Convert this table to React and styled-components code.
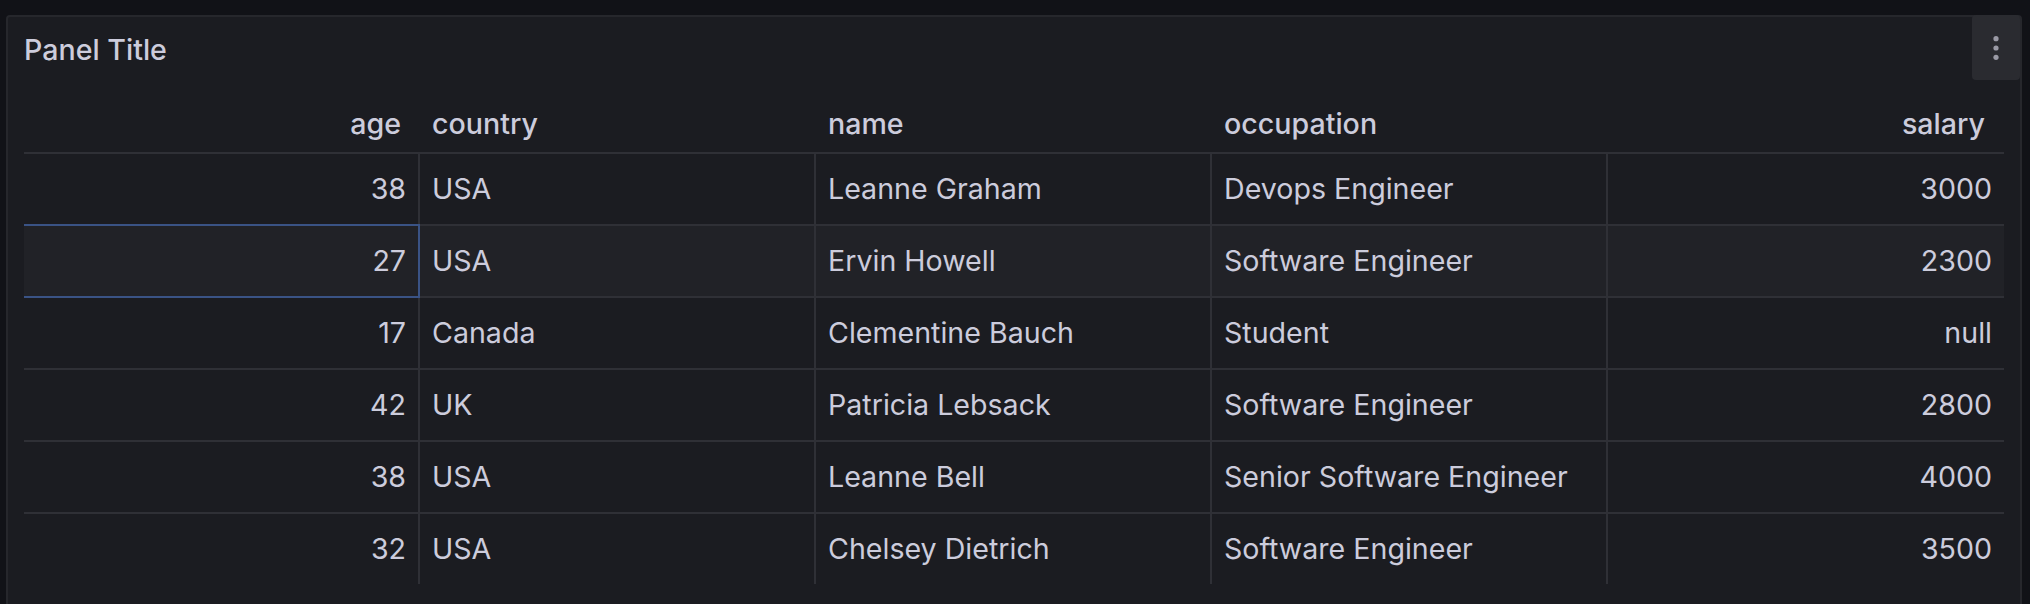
import React from "react";
import styled, { createGlobalStyle } from "styled-components";

const GlobalStyle = createGlobalStyle`
    html, body {
        margin: 0;
        padding: 0;
        background: #111217;
    }
    body {
        font-family: Inter, "Noto Sans", "Liberation Sans", sans-serif;
        color: #ccccdc;
        -webkit-font-smoothing: antialiased;
    }
`;

const Page = styled.div`
    width: 2030px;
    height: 604px;
    box-sizing: border-box;
    padding: 15px 8px 0 6px;
    overflow: hidden;
`;

const Panel = styled.div`
    box-sizing: border-box;
    height: 640px;
    background: #1b1c21;
    border: 2px solid #26272c;
    border-radius: 4px;
    padding: 0 16px;
`;

const PanelHeader = styled.div`
    height: 65px;
    display: flex;
    align-items: center;
    justify-content: space-between;
`;

const PanelTitle = styled.h2`
    margin: 0;
    font-size: 28.6px;
    font-weight: 500;
    line-height: 40px;
    color: #ccccdc;
`;

const MenuButton = styled.button`
    align-self: flex-start;
    width: 48px;
    height: 65px;
    margin: -2px -16px 0 0;
    padding: 0;
    border: none;
    border-radius: 4px;
    background: #2a2b30;
    display: flex;
    align-items: center;
    justify-content: center;
    cursor: pointer;
`;

const Table = styled.div`
    width: 100%;
`;

const HeaderRow = styled.div`
    display: grid;
    grid-template-columns: repeat(5, 1fr);
    border-bottom: 2px solid #2f3036;
`;

const HeaderCell = styled.div`
    box-sizing: border-box;
    height: 70px;
    display: flex;
    align-items: center;
    justify-content: ${p => (p.$right ? "flex-end" : "flex-start")};
    padding: 13px ${p => (p.$right ? "19px" : "12px")} 0 12px;
    font-size: 28.6px;
    font-weight: 500;
    line-height: 40px;
`;

const Row = styled.div`
    display: grid;
    grid-template-columns: repeat(5, 1fr);
    background: ${p => (p.$hover ? "#212227" : "transparent")};
    border-bottom: 2px solid #2f3036;

    &:last-child {
        border-bottom-color: transparent;
    }
`;

const Cell = styled.div`
    position: relative;
    box-sizing: border-box;
    height: 70px;
    display: flex;
    align-items: center;
    justify-content: ${p => (p.$right ? "flex-end" : "flex-start")};
    padding: 0 12px;
    border-right: 2px solid #2f3036;
    font-size: 28.6px;
    font-weight: 400;
    line-height: 40px;
    white-space: nowrap;

    &:last-child {
        border-right: none;
    }

    ${p =>
        p.$focus &&
        `
        &::after {
            content: "";
            position: absolute;
            top: -2px;
            bottom: -2px;
            left: 0;
            right: -2px;
            border: 2px solid #3a5385;
            border-left: none;
            pointer-events: none;
        }
    `}
`;

const columns = [
    { key: "age", right: true },
    { key: "country" },
    { key: "name" },
    { key: "occupation" },
    { key: "salary", right: true },
];

const rows = [
    { age: 38, country: "USA", name: "Leanne Graham", occupation: "Devops Engineer", salary: 3000 },
    { age: 27, country: "USA", name: "Ervin Howell", occupation: "Software Engineer", salary: 2300 },
    { age: 17, country: "Canada", name: "Clementine Bauch", occupation: "Student", salary: null },
    { age: 42, country: "UK", name: "Patricia Lebsack", occupation: "Software Engineer", salary: 2800 },
    { age: 38, country: "USA", name: "Leanne Bell", occupation: "Senior Software Engineer", salary: 4000 },
    { age: 32, country: "USA", name: "Chelsey Dietrich", occupation: "Software Engineer", salary: 3500 },
];

// row under the pointer, and the cell that has focus
const hoverRow = 1;

const DotsIcon = () => (
    <svg width="10" height="24" viewBox="0 0 10 24">
        <circle cx="5" cy="2.7" r="2.6" fill="#9a9aa5" />
        <circle cx="5" cy="12" r="2.6" fill="#9a9aa5" />
        <circle cx="5" cy="21.3" r="2.6" fill="#9a9aa5" />
    </svg>
);

const App = () => (
    <>
        <GlobalStyle />
        <Page>
            <Panel>
                <PanelHeader>
                    <PanelTitle>Panel Title</PanelTitle>
                    <MenuButton aria-label="Menu">
                        <DotsIcon />
                    </MenuButton>
                </PanelHeader>
                <Table>
                    <HeaderRow>
                        {columns.map(col => (
                            <HeaderCell key={col.key} $right={col.right}>
                                {col.key}
                            </HeaderCell>
                        ))}
                    </HeaderRow>
                    {rows.map((row, i) => (
                        <Row key={i} $hover={i === hoverRow}>
                            {columns.map((col, j) => (
                                <Cell
                                    key={col.key}
                                    $right={col.right}
                                    $focus={i === hoverRow && j === 0}
                                >
                                    {row[col.key] === null ? "null" : row[col.key]}
                                </Cell>
                            ))}
                        </Row>
                    ))}
                </Table>
            </Panel>
        </Page>
    </>
);

export default App;
